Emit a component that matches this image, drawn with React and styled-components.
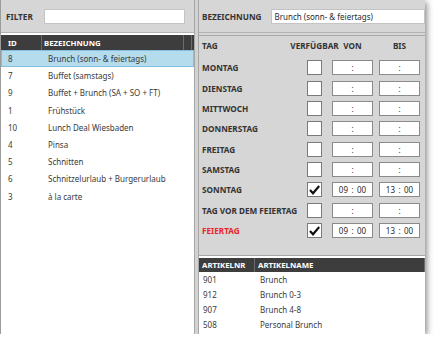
import React from 'react';
import styled, { createGlobalStyle } from 'styled-components';

const GlobalStyle = createGlobalStyle`
  html, body {
    margin: 0;
    padding: 0;
    background: #ffffff;
  }
  body {
    font-family: 'Noto Sans', 'Open Sans', 'Liberation Sans', sans-serif;
    font-size: 8px;
    color: #3a3a3a;
  }
`;

const Window = styled.div`
  width: 425px;
  height: 334px;
  display: flex;
  background: #d6d6d6;
  border-left: 1px solid #9c9c9c;
  box-sizing: border-box;
  box-shadow: 2px 2px 6px rgba(0, 0, 0, 0.45);
`;

const LeftPane = styled.div`
  width: 193px;
  display: flex;
  flex-direction: column;
  background: #ffffff;
`;

const Bar = styled.div`
  height: 33px;
  flex: none;
  display: flex;
  align-items: center;
  gap: ${p => p.$gap}px;
  padding: 0 ${p => p.$right}px 0 ${p => p.$left}px;
  background: #d6d6d6;
  border-bottom: 1px solid #b4b4b4;
  box-sizing: border-box;
`;

const Label = styled.span`
  font-weight: 700;
  font-size: 8.2px;
  color: ${p => (p.$red ? '#e8262b' : '#333333')};
  white-space: nowrap;
`;

const TextInput = styled.div`
  flex: 1;
  height: 15px;
  background: #ffffff;
  border: 1px solid #c4c4c4;
  box-sizing: border-box;
  display: flex;
  align-items: center;
  padding-left: 3px;
  font-size: 8px;
  color: #2a2a2a;
`;

const List = styled.div`
  flex: 1;
  padding-top: 2px;
  background: #ffffff;
`;

const HeadRow = styled.div`
  display: grid;
  grid-template-columns: ${p => p.$cols};
  height: ${p => p.$h}px;
  background: #3d3d3d;
  color: #ffffff;
  font-weight: 700;
  font-size: 7.8px;
`;

const HeadCell = styled.div`
  display: flex;
  align-items: center;
  padding-left: ${p => p.$pad ?? 6}px;
  border-right: 1px solid #6a6a6a;
  white-space: nowrap;
  overflow: hidden;
`;

const Row = styled.div`
  display: grid;
  grid-template-columns: ${p => p.$cols};
  height: ${p => p.$h}px;
  align-items: center;
  box-sizing: border-box;
  background: ${p => (p.$selected ? '#b4dcec' : 'transparent')};
  border: 1px solid ${p => (p.$selected ? '#84bfe2' : 'transparent')};
  color: #3a3a3a;
`;

const Cell = styled.div`
  padding-left: ${p => p.$pad ?? 6}px;
  white-space: nowrap;
`;

const Splitter = styled.div`
  width: 5px;
  flex: none;
  background: #d2d2d2;
  border-left: 1px solid #a6a6a6;
  border-right: 1px solid #a6a6a6;
  box-sizing: border-box;
`;

const RightPane = styled.div`
  flex: 1;
  display: flex;
  flex-direction: column;
`;

const DayGroup = styled.div`
  height: 221px;
  flex: none;
  margin-top: 2px;
  border-top: 1px solid #a8a8a8;
  border-bottom: 1px solid #a8a8a8;
  box-sizing: border-box;
  padding: 1px 4px 0 3px;
  background: #d6d6d6;
`;

const DayGrid = styled.div`
  display: grid;
  grid-template-columns: 105px 15px 10px 41px 6px 41px;
  grid-template-rows: ${p => p.$rows};
  align-items: center;
  margin-bottom: ${p => p.$after ?? 0}px;
`;

const Center = styled.div`
  display: flex;
  justify-content: center;
  white-space: nowrap;
`;

const CheckBox = styled.div`
  width: 15px;
  height: 15px;
  background: #ffffff;
  border: 1px solid #7a7a7a;
  box-sizing: border-box;
  display: flex;
  align-items: center;
  justify-content: center;
`;

const TimeBox = styled.div`
  width: 41px;
  height: 15px;
  background: #ffffff;
  border: 1px solid #8a8a8a;
  box-sizing: border-box;
  display: grid;
  grid-template-columns: 1fr 9px 1fr;
  align-items: center;
  font-size: 8px;
  color: #2a2a2a;
`;

const TimePart = styled.span`
  text-align: ${p => p.$align};
`;

const Articles = styled.div`
  flex: 1;
  background: #ffffff;
  padding-top: 2px;
`;

const LEFT_COLS = '41px 142px 8px';
const ART_COLS = '56px 1fr';

const groups = [
  ['8', 'Brunch (sonn- & feiertags)'],
  ['7', 'Buffet (samstags)'],
  ['9', 'Buffet + Brunch (SA + SO + FT)'],
  ['1', 'Frühstück'],
  ['10', 'Lunch Deal Wiesbaden'],
  ['4', 'Pinsa'],
  ['5', 'Schnitten'],
  ['6', 'Schnitzelurlaub + Burgerurlaub'],
  ['3', 'à la carte'],
];

const days = [
  { name: 'MONTAG' },
  { name: 'DIENSTAG' },
  { name: 'MITTWOCH' },
  { name: 'DONNERSTAG' },
  { name: 'FREITAG' },
  { name: 'SAMSTAG' },
  { name: 'SONNTAG', on: true, from: ['09', '00'], to: ['13', '00'] },
  { name: 'TAG VOR DEM FEIERTAG' },
  { name: 'FEIERTAG', red: true, on: true, from: ['09', '00'], to: ['13', '00'] },
];

const articles = [
  ['901', 'Brunch'],
  ['912', 'Brunch 0-3'],
  ['907', 'Brunch 4-8'],
  ['508', 'Personal Brunch'],
];

const Check = () => (
  <svg width="11" height="10" viewBox="0 0 11 10">
    <path d="M1 5 L4 8.3 L10.2 1" fill="none" stroke="#111" strokeWidth="2.1" />
  </svg>
);

const Time = ({ value }) => (
  <TimeBox>
    <TimePart $align="right">{value ? value[0] : ''}</TimePart>
    <Center>:</Center>
    <TimePart $align="left">{value ? value[1] : ''}</TimePart>
  </TimeBox>
);

export default function App() {
  return (
    <>
      <GlobalStyle />
      <Window>
        <LeftPane>
          <Bar $left={5} $right={9} $gap={11}>
            <Label>FILTER</Label>
            <TextInput />
          </Bar>
          <List>
            <HeadRow $cols={LEFT_COLS} $h={15}>
              <HeadCell $pad={7}>ID</HeadCell>
              <HeadCell $pad={2}>BEZEICHNUNG</HeadCell>
              <HeadCell />
            </HeadRow>
            {groups.map(([id, name], i) => (
              <Row key={id} $cols={LEFT_COLS} $h={17.2} $selected={i === 0}>
                <Cell $pad={6}>{id}</Cell>
                <Cell $pad={5}>{name}</Cell>
              </Row>
            ))}
          </List>
        </LeftPane>
        <Splitter />
        <RightPane>
          <Bar $left={3} $right={0} $gap={9}>
            <Label>BEZEICHNUNG</Label>
            <TextInput>Brunch (sonn- &amp; feiertags)</TextInput>
          </Bar>
          <DayGroup>
            <DayGrid $rows="17px" $after={3.5}>
              <Label>TAG</Label>
              <Center><Label>VERFÜGBAR</Label></Center>
              <span />
              <Center><Label>VON</Label></Center>
              <span />
              <Center><Label>BIS</Label></Center>
            </DayGrid>
            <DayGrid $rows="repeat(9, 20.375px)">
              {days.map(d => (
                <React.Fragment key={d.name}>
                  <Label $red={d.red}>{d.name}</Label>
                  <CheckBox>{d.on && <Check />}</CheckBox>
                  <span />
                  <Time value={d.from} />
                  <span />
                  <Time value={d.to} />
                </React.Fragment>
              ))}
            </DayGrid>
          </DayGroup>
          <Articles>
            <HeadRow $cols={ART_COLS} $h={14}>
              <HeadCell $pad={3}>ARTIKELNR</HeadCell>
              <HeadCell $pad={3}>ARTIKELNAME</HeadCell>
            </HeadRow>
            {articles.map(([nr, name]) => (
              <Row key={nr} $cols={ART_COLS} $h={15}>
                <Cell $pad={3}>{nr}</Cell>
                <Cell $pad={4}>{name}</Cell>
              </Row>
            ))}
          </Articles>
        </RightPane>
      </Window>
    </>
  );
}
